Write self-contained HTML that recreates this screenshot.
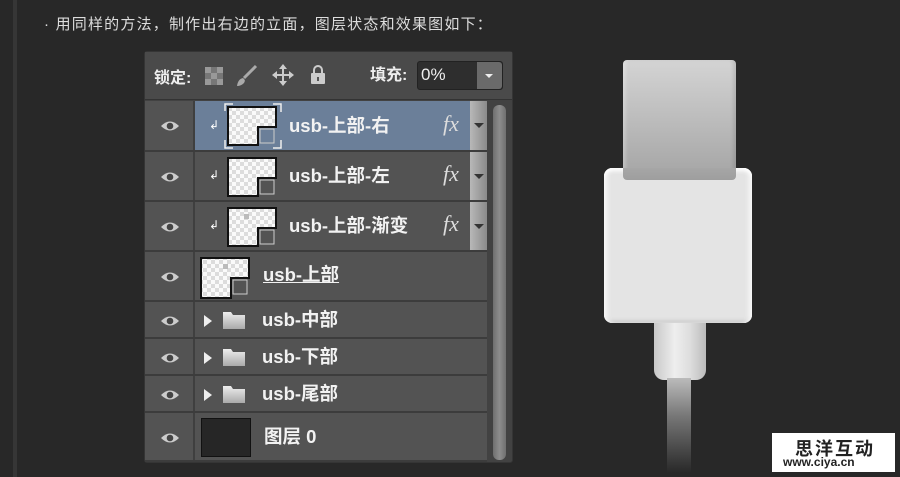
<!DOCTYPE html>
<html><head><meta charset="utf-8"><style>
*{margin:0;padding:0;box-sizing:border-box}
body{width:900px;height:477px;background:#282828;position:relative;overflow:hidden;font-family:"Liberation Sans","Noto Sans CJK SC",sans-serif;color:#eee}
.a{position:absolute}
.vl{left:13px;top:0;width:4px;height:477px;background:#363636}
.title{left:44px;top:13px;font-size:15px;color:#ddd;letter-spacing:1.2px}
.panel{left:144px;top:51px;width:369px;height:412px;background:#424242;border:1px solid #353535;border-radius:3px}
.hdr{left:0;top:0;width:367px;height:48px;background:#4a4a4a;border-bottom:1px solid #333}
.row{position:absolute;left:0;width:342px;background:#535353;border-bottom:2px solid #3c3c3c}
.eyec{position:absolute;left:0;top:0;width:50px;height:100%;border-right:2px solid #3f3f3f}
.eye{position:absolute;left:15px;width:20px;height:12px}
.lbl{position:absolute;font-size:18.5px;font-weight:bold;color:#f2f2f2;white-space:nowrap;line-height:22px}
.fx{position:absolute;left:298px;font-family:"Liberation Serif",serif;font-style:italic;font-size:22px;color:#ddd}
.arr{position:absolute;left:325px;top:0;width:17px;height:100%;background:linear-gradient(90deg,#b8b8b8,#8a8a8a)}
.arr:after{content:"";position:absolute;left:4px;top:45%;border-left:5px solid transparent;border-right:5px solid transparent;border-top:5px solid #333}
.sb{left:348px;top:53px;width:13px;height:355px;border-radius:6px;background:linear-gradient(90deg,#6f6f6f,#8d8d8d,#6f6f6f)}
</style></head><body>
<svg width="0" height="0" style="position:absolute"><defs><pattern id="ck" width="8" height="8" patternUnits="userSpaceOnUse"><rect width="8" height="8" fill="#fafafa"/><rect width="4" height="4" fill="#dcdcdc"/><rect x="4" y="4" width="4" height="4" fill="#dcdcdc"/></pattern></defs></svg>
<div class="a vl"></div>
<div class="a title">· 用同样的方法，制作出右边的立面，图层状态和效果图如下：</div>

<div class="a panel">
 <div class="a hdr">
  <div class="a" style="left:9px;top:12px;font-size:16px;font-weight:bold;color:#eee">锁定:</div>
  <svg class="a" style="left:60px;top:15px" width="18" height="18"><rect width="18" height="18" fill="#777"/><rect x="0" y="0" width="6" height="6" fill="#999"/><rect x="12" y="0" width="6" height="6" fill="#999"/><rect x="6" y="6" width="6" height="6" fill="#999"/><rect x="0" y="12" width="6" height="6" fill="#999"/><rect x="12" y="12" width="6" height="6" fill="#999"/></svg>
  <svg class="a" style="left:89px;top:12px" width="24" height="24"><path d="M22 2 L10 14" stroke="#aaa" stroke-width="3"/><path d="M3 22 Q4 15 9 14 Q12 16 10 19 Q7 22 3 22Z" fill="#aaa"/></svg>
  <svg class="a" style="left:127px;top:12px" width="22" height="22" fill="#ccc" stroke="#ccc"><path d="M11 2V20M2 11H20" stroke-width="2"/><path d="M11 0L7 5H15Z M11 22L7 17H15Z M0 11L5 7V15Z M22 11L17 7V15Z" stroke="none"/></svg>
  <svg class="a" style="left:165px;top:12px" width="16" height="21"><path d="M4 9V6a4 4 0 0 1 8 0v3" stroke="#ccc" stroke-width="2" fill="none"/><rect x="1" y="9" width="14" height="11" rx="1" fill="#ccc"/><rect x="7" y="13" width="2" height="4" fill="#555"/></svg>
  <div class="a" style="left:225px;top:9px;font-size:16px;font-weight:bold;color:#eee">填充:</div>
  <div class="a" style="left:272px;top:9px;width:86px;height:29px;background:#2e2e2e;border:1px solid #222;border-radius:3px"></div>
  <div class="a" style="left:276px;top:13px;font-size:17px;color:#eee">0%</div>
  <div class="a" style="left:332px;top:10px;width:25px;height:27px;background:#6a6a6a;border-radius:0 3px 3px 0"></div>
  <div class="a" style="left:340px;top:22px;border-left:4px solid transparent;border-right:4px solid transparent;border-top:4px solid #eee"></div>
 </div>

 <div class="row" style="top:49px;height:51px;background:#6b7f99"><div class="eyec" style="background:#535353"></div>
  <svg class="eye" style="top:19px" viewBox="0 0 20 12"><path d="M1 6Q10-3 19 6Q10 15 1 6Z" fill="#ccc"/><circle cx="10" cy="6" r="3.3" fill="#444"/></svg>
  <div class="a" style="left:64px;top:17px;font-size:12px;color:#fff">↲</div>
  <svg class="a" style="left:79px;top:2px" width="58" height="46"><path d="M1 8V1H9M49 1H57V9M57 37V45H49M9 45H1V37" stroke="#eee" stroke-width="1.5" fill="none"/><path d="M4 4H52V24H34V42H4Z" fill="url(#ck)" stroke="#111" stroke-width="2"/><rect x="36" y="26" width="14" height="14" fill="none" stroke="#ccc"/></svg>
  <div class="lbl" style="left:144px;top:14px">usb-上部-右</div>
  <div class="fx" style="top:10px">fx</div><div class="arr"></div>
 </div>
 <div class="row" style="top:100px;height:50px"><div class="eyec"></div>
  <svg class="eye" style="top:19px" viewBox="0 0 20 12"><path d="M1 6Q10-3 19 6Q10 15 1 6Z" fill="#ccc"/><circle cx="10" cy="6" r="3.3" fill="#444"/></svg>
  <div class="a" style="left:64px;top:16px;font-size:12px;color:#fff">↲</div>
  <svg class="a" style="left:79px;top:2px" width="58" height="46"><path d="M4 4H52V24H34V42H4Z" fill="url(#ck)" stroke="#111" stroke-width="2"/><rect x="36" y="26" width="14" height="14" fill="none" stroke="#ccc"/></svg>
  <div class="lbl" style="left:144px;top:13px">usb-上部-左</div>
  <div class="fx" style="top:9px">fx</div><div class="arr"></div>
 </div>
 <div class="row" style="top:150px;height:50px"><div class="eyec"></div>
  <svg class="eye" style="top:19px" viewBox="0 0 20 12"><path d="M1 6Q10-3 19 6Q10 15 1 6Z" fill="#ccc"/><circle cx="10" cy="6" r="3.3" fill="#444"/></svg>
  <div class="a" style="left:64px;top:16px;font-size:12px;color:#fff">↲</div>
  <svg class="a" style="left:79px;top:2px" width="58" height="46"><path d="M4 4H52V24H34V42H4Z" fill="url(#ck)" stroke="#111" stroke-width="2"/><rect x="20" y="10" width="5" height="5" fill="#bbb"/><rect x="36" y="26" width="14" height="14" fill="none" stroke="#ccc"/></svg>
  <div class="lbl" style="left:144px;top:13px">usb-上部-渐变</div>
  <div class="fx" style="top:9px">fx</div><div class="arr"></div>
 </div>
 <div class="row" style="top:200px;height:50px"><div class="eyec"></div>
  <svg class="eye" style="top:19px" viewBox="0 0 20 12"><path d="M1 6Q10-3 19 6Q10 15 1 6Z" fill="#ccc"/><circle cx="10" cy="6" r="3.3" fill="#444"/></svg>
  <svg class="a" style="left:54px;top:4px" width="58" height="46"><path d="M2 2H50V22H32V42H2Z" fill="url(#ck)" stroke="#111" stroke-width="2"/><rect x="24" y="8" width="5" height="5" fill="#bbb"/><rect x="34" y="24" width="14" height="14" fill="none" stroke="#ccc"/></svg>
  <div class="lbl" style="left:118px;top:12px;text-decoration:underline">usb-上部</div>
 </div>
 <div class="row" style="top:250px;height:37px"><div class="eyec"></div>
  <svg class="eye" style="top:13px" viewBox="0 0 20 12"><path d="M1 6Q10-3 19 6Q10 15 1 6Z" fill="#ccc"/><circle cx="10" cy="6" r="3.3" fill="#444"/></svg>
  <div class="a" style="left:59px;top:13px;border-top:6px solid transparent;border-bottom:6px solid transparent;border-left:8px solid #eee"></div>
  <svg class="a" style="left:77px;top:9px" width="24" height="19"><defs><linearGradient id="fg" x1="0" y1="0" x2="0" y2="1"><stop offset="0" stop-color="#eee"/><stop offset="1" stop-color="#aaa"/></linearGradient></defs><path d="M1 1H9L11 4H23V18H1Z" fill="url(#fg)"/></svg>
  <div class="lbl" style="left:117px;top:7px">usb-中部</div>
 </div>
 <div class="row" style="top:287px;height:37px"><div class="eyec"></div>
  <svg class="eye" style="top:13px" viewBox="0 0 20 12"><path d="M1 6Q10-3 19 6Q10 15 1 6Z" fill="#ccc"/><circle cx="10" cy="6" r="3.3" fill="#444"/></svg>
  <div class="a" style="left:59px;top:13px;border-top:6px solid transparent;border-bottom:6px solid transparent;border-left:8px solid #eee"></div>
  <svg class="a" style="left:77px;top:9px" width="24" height="19"><path d="M1 1H9L11 4H23V18H1Z" fill="url(#fg)"/></svg>
  <div class="lbl" style="left:117px;top:7px">usb-下部</div>
 </div>
 <div class="row" style="top:324px;height:37px"><div class="eyec"></div>
  <svg class="eye" style="top:13px" viewBox="0 0 20 12"><path d="M1 6Q10-3 19 6Q10 15 1 6Z" fill="#ccc"/><circle cx="10" cy="6" r="3.3" fill="#444"/></svg>
  <div class="a" style="left:59px;top:13px;border-top:6px solid transparent;border-bottom:6px solid transparent;border-left:8px solid #eee"></div>
  <svg class="a" style="left:77px;top:9px" width="24" height="19"><path d="M1 1H9L11 4H23V18H1Z" fill="url(#fg)"/></svg>
  <div class="lbl" style="left:117px;top:7px">usb-尾部</div>
 </div>
 <div class="row" style="top:361px;height:49px"><div class="eyec"></div>
  <svg class="eye" style="top:19px" viewBox="0 0 20 12"><path d="M1 6Q10-3 19 6Q10 15 1 6Z" fill="#ccc"/><circle cx="10" cy="6" r="3.3" fill="#444"/></svg>
  <div class="a" style="left:56px;top:5px;width:50px;height:39px;background:#262626;border:1px solid #111"></div>
  <div class="lbl" style="left:119px;top:13px">图层 0</div>
 </div>
 <div class="a sb"></div>
</div>

<div class="a" style="left:623px;top:60px;width:113px;height:120px;border-radius:4px;background:linear-gradient(180deg,#d4d4d4,#a4a4a4);box-shadow:inset 3px 0 3px rgba(255,255,255,.25),inset -3px 0 3px rgba(0,0,0,.1)"></div>
<div class="a" style="left:654px;top:322px;width:52px;height:58px;border-radius:0 0 10px 10px;background:linear-gradient(90deg,#c8c8c8,#eee 40%,#ddd 70%,#bbb)"></div>
<div class="a" style="left:667px;top:378px;width:24px;height:95px;background:linear-gradient(180deg,#bbb,#777 40%,#282828)"></div>
<div class="a" style="left:604px;top:168px;width:148px;height:155px;border-radius:8px;background:#e4e4e4;box-shadow:inset 0 6px 4px -3px #fff,inset 6px 0 5px -3px #fafafa,inset -6px 0 5px -3px #fafafa,inset 0 -3px 3px #cfcfcf"></div>
<div class="a" style="left:623px;top:168px;width:113px;height:12px;background:linear-gradient(180deg,#a6a6a6,#9e9e9e);border-radius:0 0 4px 4px"></div>

<div class="a" style="left:772px;top:433px;width:123px;height:39px;background:#fff"></div>
<div class="a" style="left:795px;top:435px;font-size:18px;font-weight:bold;color:#222;letter-spacing:2px">思洋互动</div>
<div class="a" style="left:783px;top:455px;font-size:12px;font-weight:bold;color:#222">www.ciya.cn</div>
</body></html>
